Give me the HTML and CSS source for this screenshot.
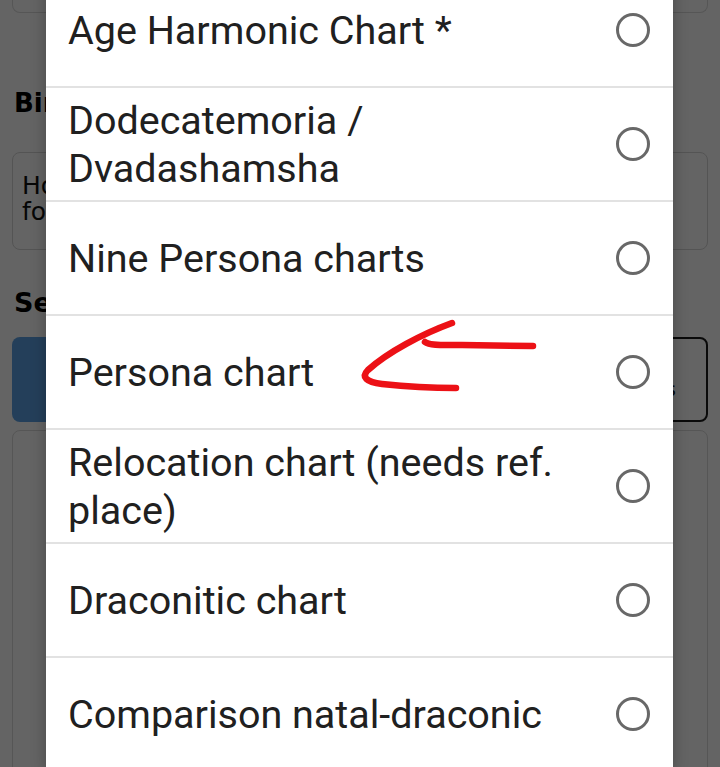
FILE: index.html
```html
<!DOCTYPE html>
<html lang="en">
<head>
<meta charset="utf-8">
<title>Chart type</title>
<link rel="stylesheet" href="styles.css">
</head>
<body>
<div class="page">
  <div class="topbox"></div>
  <h2 class="heading first">Birth data</h2>
  <div class="note">How to enter the birth data<br>for the selected chart</div>
  <h2 class="heading second">Select chart type</h2>
  <div class="btns">
    <div class="btn primary">Natal chart</div>
    <div class="btn outline">Other charts</div>
  </div>
  <div class="panel"></div>
</div>
<div class="overlay"></div>
<div class="dialog">
  <ul class="list">
    <li class="item"><span class="label">Age Harmonic Chart *</span><span class="radio"></span></li>
    <li class="item"><span class="label">Dodecatemoria / Dvadashamsha</span><span class="radio"></span></li>
    <li class="item"><span class="label">Nine Persona charts</span><span class="radio"></span></li>
    <li class="item"><span class="label">Persona chart</span><span class="radio"></span></li>
    <li class="item"><span class="label">Relocation chart (needs ref. place)</span><span class="radio"></span></li>
    <li class="item"><span class="label">Draconitic chart</span><span class="radio"></span></li>
    <li class="item"><span class="label">Comparison natal-draconic</span><span class="radio"></span></li>
  </ul>
</div>
<svg class="arrow" width="720" height="767" viewBox="0 0 720 767" xmlns="http://www.w3.org/2000/svg">
  <path d="M452 323 C422 334 388 352 368 370 C361 377 366 382 382 384 C410 387 436 388 456 388" fill="none" stroke="#ec1116" stroke-width="6.5" stroke-linecap="round" stroke-linejoin="round"/>
  <path d="M425 342 C430 346 444 345 462 345 L533 346" fill="none" stroke="#ec1116" stroke-width="6.5" stroke-linecap="round"/>
</svg>
</body>
</html>
```

FILE: styles.css
```css
html, body {
  margin: 0;
  padding: 0;
}
body {
  width: 720px;
  height: 767px;
  overflow: hidden;
  background: #fafafa;
  font-family: "DejaVu Sans", sans-serif;
  position: relative;
}
.page {
  padding: 0 12px;
}
.topbox {
  height: 13px;
  box-sizing: border-box;
  border: 1px solid #d6d6d6;
  border-top: none;
  border-radius: 0 0 8px 8px;
}
.heading {
  margin: 0;
  padding-left: 2px;
  font-size: 26px;
  line-height: 30px;
  font-weight: bold;
  color: #000;
}
.heading.first {
  margin-top: 75px;
}
.heading.second {
  margin-top: 38px;
  font-size: 27px;
}
.note {
  margin-top: 34px;
  height: 98px;
  box-sizing: border-box;
  border: 1px solid #d2d2d2;
  border-radius: 8px;
  padding: 20px 10px 0 9px;
  font-size: 25px;
  line-height: 26px;
  color: #111;
}
.btns {
  margin-top: 19px;
  display: grid;
  grid-template-columns: 1fr 1fr;
  gap: 16px;
  height: 85px;
}
.btn {
  border-radius: 8px;
  box-sizing: border-box;
  display: flex;
  align-items: center;
  font-size: 20px;
  line-height: 22px;
}
.primary {
  background: #5b9fe0;
  color: #fff;
  justify-content: center;
}
.outline {
  border: 2px solid #1a1a1a;
  justify-content: flex-end;
  text-align: right;
  padding: 18px 30px 0 0;
  color: #111;
}
.panel {
  margin-top: 8px;
  height: 400px;
  border: 1px solid #d6d6d6;
  border-radius: 8px;
}
.overlay {
  position: absolute;
  inset: 0;
  background: rgba(0, 0, 0, 0.6);
}
.dialog {
  position: absolute;
  left: 46px;
  top: -26px;
  width: 627px;
  background: #fff;
  box-shadow: 0 0 14px rgba(0, 0, 0, 0.28);
}
.list {
  list-style: none;
  margin: 0;
  padding: 0;
}
.item {
  display: flex;
  align-items: center;
  gap: 24px;
  min-height: 112px;
  border-bottom: 2px solid #e2e2e2;
  padding: 0 23px 0 22px;
}
.label {
  flex: 1;
  font-family: Roboto, "DejaVu Sans", sans-serif;
  font-size: 39.5px;
  line-height: 48px;
  padding-top: 2px;
  color: #202020;
}
.radio {
  flex: none;
  width: 34px;
  height: 34px;
  box-sizing: border-box;
  border: 3px solid #686868;
  border-radius: 50%;
}
.arrow {
  position: absolute;
  left: 0;
  top: 0;
  pointer-events: none;
}
```
